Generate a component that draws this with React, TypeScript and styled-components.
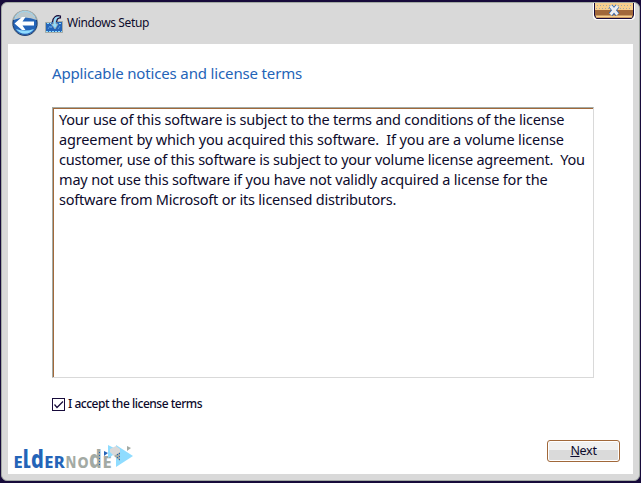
import React from "react";
import styled, { createGlobalStyle } from "styled-components";

const c = {
  navy: "#170b3b",
  face: "#d9d9d9",
  blue: "#2464b8",
  sky: "#8fdcff",
  brown: "#a1683a",
  tan: "#f7cf8e",
  grey: "#a3aaa4",
};

const GlobalStyle = createGlobalStyle`
  * { box-sizing: border-box; }
  html, body { margin: 0; background: ${c.navy}; overflow: hidden; }
  body { font-family: "Noto Sans", "Open Sans", sans-serif; color: #0d0b2c; }
`;

const Desktop = styled.div`
  width: 641px;
  height: 483px;
  padding: 2px 1px 2px 1px;
  background: ${c.navy};
`;

const Window = styled.div`
  position: relative;
  width: 639px;
  height: 479px;
  display: flex;
  flex-direction: column;
  padding: 0 6px 6px;
  border: 1px solid ${c.grey};
  border-radius: 6px;
  background: ${c.face};
`;

const TitleBar = styled.header`
  height: 41px;
  display: flex;
  align-items: center;
  padding: 0 0 1px 3px;
`;

const BackIcon = styled.svg`
  width: 28px;
  height: 28px;
  margin-right: 6px;
`;

const SetupIcon = styled.svg`
  width: 18px;
  height: 18px;
  margin: 2px 4px 0 0;
`;

const Line = styled.span<{ $size: number; $spacing?: number; $weight?: number }>`
  display: block;
  width: max-content;
  white-space: pre;
  font-size: ${(p) => p.$size}px;
  font-weight: ${(p) => p.$weight ?? 400};
  line-height: 20px;
  letter-spacing: ${(p) => p.$spacing ?? 0}px;
`;

const CloseButton = styled.button`
  position: absolute;
  top: 0;
  right: 4px;
  width: 42px;
  height: 17px;
  padding: 0;
  border: 1px solid #fff;
  border-top: 0;
  border-radius: 0 0 4px 4px;
  background: transparent;
  svg { display: block; }
`;

const Page = styled.main`
  flex: 1;
  display: flex;
  flex-direction: column;
  padding: 19px 37px 0 44px;
  background: #fff;
`;

const Heading = styled.h1`
  margin: 0;
  height: 44px;
  font-weight: 400;
  color: ${c.blue};
`;

const Terms = styled.section`
  width: 542px;
  height: 271px;
  padding: 1px 0 0 6px;
  border: 1px solid ${c.face};
  border-top-color: ${c.grey};
  border-left-color: ${c.grey};
  box-shadow: inset 1px 1px 0 ${c.brown};
`;

const Accept = styled.label`
  height: 20px;
  margin-top: 16px;
  display: flex;
  align-items: center;
  gap: 3px;
`;

const Box = styled.svg`
  width: 13px;
  height: 13px;
`;

const Footer = styled.footer`
  display: flex;
  justify-content: space-between;
  margin: 16px -24px 0 -40px;
`;

const Logo = styled.svg`
  width: 124px;
  height: 32px;
  margin-top: 10px;
  overflow: visible;
`;

const NextButton = styled.button`
  width: 73px;
  height: 22px;
  margin: 10px 0 0;
  padding: 0;
  display: flex;
  justify-content: center;
  align-items: center;
  font-family: inherit;
  color: inherit;
  border: 1px solid ${c.brown};
  border-radius: 3px;
  box-shadow: inset 0 0 0 1px #fff;
  background: linear-gradient(#f0f0f0 0 45%, #dadada 45%);
`;

const terms: [string, number][] = [
  ["Your use of this software is subject to the terms and conditions of the license", -0.21],
  ["agreement by which you acquired this software.  If you are a volume license", -0.14],
  ["customer, use of this software is subject to your volume license agreement.  You", -0.22],
  ["may not use this software if you have not validly acquired a license for the", -0.18],
  ["software from Microsoft or its licensed distributors.", -0.22],
];

export default function App() {
  return (
    <Desktop>
      <GlobalStyle />
      <Window>
        <TitleBar>
          <BackIcon viewBox="0 0 28 28">
            <circle cx="14" cy="14" r="12.5" fill={c.blue} stroke={c.grey} strokeWidth="1.2" />
            <path d="M2.5 11A11.7 11.7 0 0 1 25.5 11Q14 6 2.5 11Z" fill="#bcc8cc" />
            <path d="M4 9A11 11 0 0 1 24 9" fill="none" stroke={c.sky} strokeDasharray="2 1" />
            <path d="M5 20Q14 23 23 20A11 11 0 0 1 5 20Z" fill={c.sky} />
            <path d="M2.5 11A12 12 0 1 0 25.5 11" fill="none" stroke="#173a78" />
            <path d="M3.5 14.5 11 8h3.5L11.5 12.5H23v4H11.5L14.5 21H11Z" fill="#fff" />
          </BackIcon>
          <SetupIcon viewBox="0 0 18 18">
            <path d="M.5 7.5h5l2-1h10v11H.5Z" fill={c.blue} stroke={c.grey} />
            <path d="M1 16.5h16M2 8.5h4M14 8.5h3" stroke={c.sky} strokeDasharray="2 1" />
            <path d="M3 14l2-3 1 2 2-4M13 14l2-3" stroke="#5b9ee0" fill="none" />
            <path d="M15 1.5C10 0 8 3 8.5 9H6.5l3.5 5 3-5h-2C10.5 5 12 3 15 2.5Z" fill={c.sky} stroke={c.grey} strokeWidth=".8" />
            <path d="M15.5 3.5V1C11-.5 7.5 3 7.5 7M11.5 7l1-3 3-1.5" fill="none" stroke={c.navy} strokeWidth="1.1" />
          </SetupIcon>
          <Line $size={12} $spacing={-0.38}>Windows Setup</Line>
        </TitleBar>
        <CloseButton aria-label="Close">
          <svg width="40" height="16" viewBox="0 0 40 16">
            <path d="M.5 0v12.5l2 3h35l2-3V0" fill={c.brown} stroke={c.navy} />
            <path d="M1 0h38v7H1Z" fill={c.tan} />
            <path d="M3 2.5h35M2 5.5h36" stroke={c.grey} strokeDasharray="1 2" />
            <path d="M2 13.5h36" stroke={c.tan} strokeWidth="2" />
            <path d="m16.5 3 7 8.5m0-8.5-7 8.5" stroke={c.blue} strokeWidth="4.4" />
            <path d="m16.5 3 7 8.5m0-8.5-7 8.5" stroke="#eee" strokeWidth="3" />
          </svg>
        </CloseButton>
        <Page>
          <Heading><Line $size={15} $spacing={-0.15}>Applicable notices and license terms</Line></Heading>
          <Terms>
            {terms.map(([text, spacing]) => (
              <Line key={text} $size={14.5} $spacing={spacing}>{text}</Line>
            ))}
          </Terms>
          <Accept>
            <Box viewBox="0 0 13 13">
              <rect x=".5" y=".5" width="12" height="12" fill="#fff" stroke={c.navy} />
              <path d="m2.5 6.5 2.5 3L11 3.5" fill="none" stroke={c.navy} strokeWidth="1.2" />
            </Box>
            <Line $size={12} $spacing={-0.48} $weight={500}>I accept the license terms</Line>
          </Accept>
          <Footer>
            <Logo viewBox="0 0 124 32" fontFamily="Noto Sans, sans-serif" fontWeight="800" fontSize="16.5">
              <text fill={c.blue} y="28" x="1.4">E</text>
              <text fill={c.blue} y="28" fontSize="24" transform="translate(10.8) scale(.8 1)">l</text>
              <text fill={c.blue} y="28" fontSize="24" transform="translate(19) scale(.84 1)">d</text>
              <text fill={c.blue} y="28" x="32.2 41.8">ER</text>
              <text fill={c.grey} y="28" transform="translate(53.6) scale(.8 1)">N</text>
              <text fill={c.grey} y="28" transform="translate(65.4) scale(.85 1)">O</text>
              <text fill={c.grey} y="28" fontSize="24" transform="translate(77) scale(.84 1)">d</text>
              <text fill={c.grey} y="28" x="90.5">E</text>
              <path d="M14.3 24.5q0 2.2 1.7 2.2h2.5" fill="none" stroke={c.blue} strokeWidth="2.5" />
              <path d="m104 5 17 11-17 11Z" fill={c.sky} />
              <path d="m96 5 12 6-12 7Z" fill={c.sky} />
              <path d="m98 9 6-3 4 3v5l-6 2-4-4Z" fill={c.face} />
              <path d="m92 11 4 2-4 3Z" fill={c.blue} />
              <path d="m115 6 4 2-4 3Z" fill={c.grey} />
              <path d="m102 16 6-4v9Z" fill={c.grey} />
              <path d="M105.5 14v5M107.5 13v7M87.5 12v15" stroke={c.blue} strokeDasharray="1 2" />
            </Logo>
            <NextButton><Line $size={12.5} $spacing={-0.3}><u>N</u>ext</Line></NextButton>
          </Footer>
        </Page>
      </Window>
    </Desktop>
  );
}
